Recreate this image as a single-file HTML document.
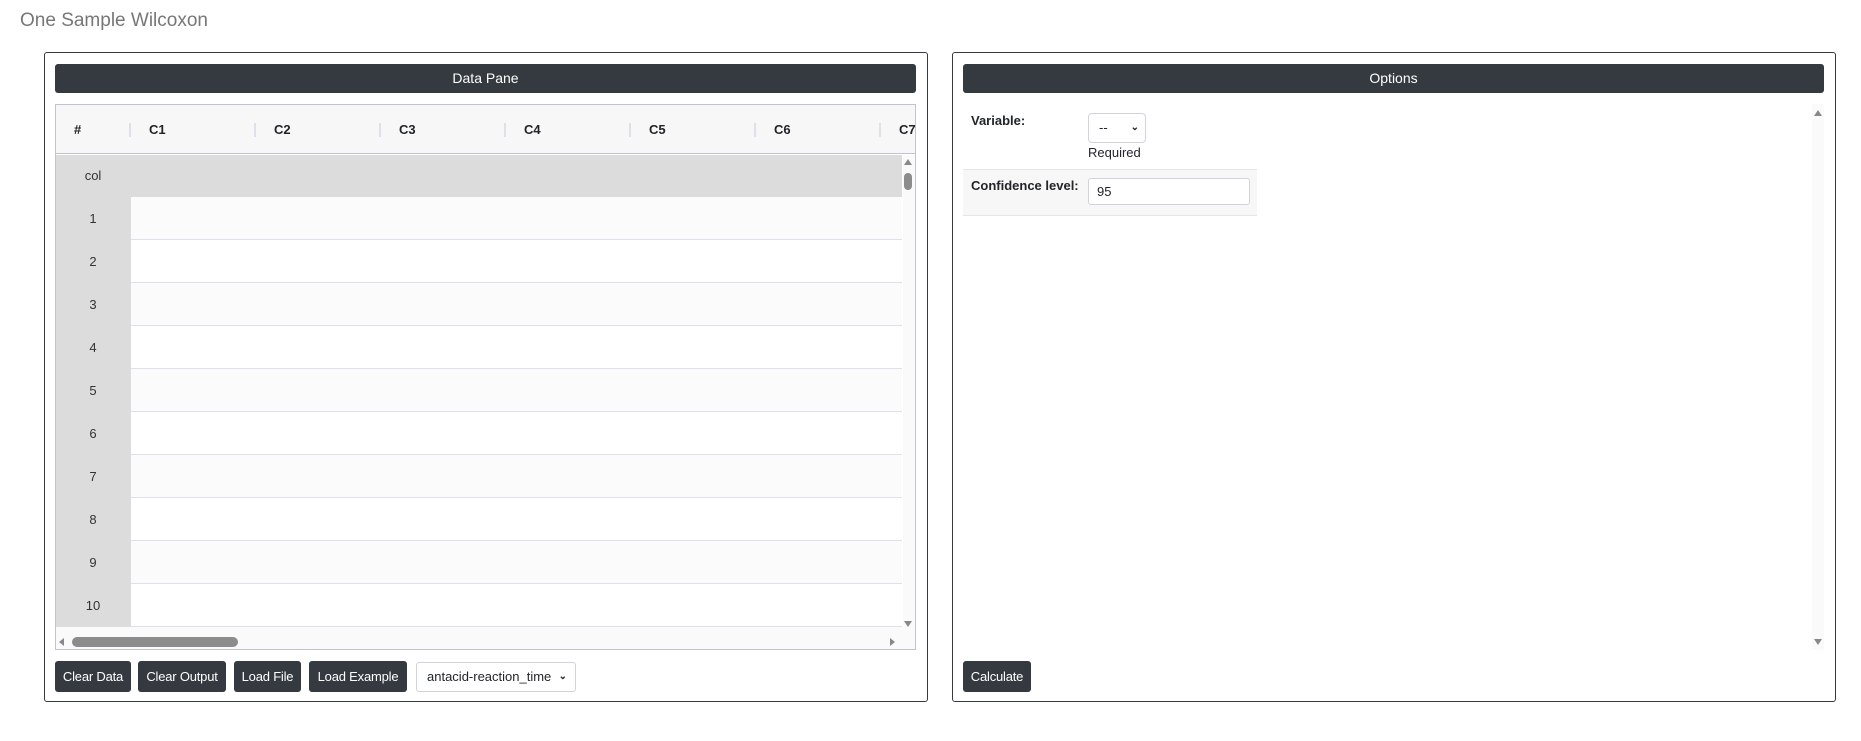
<!DOCTYPE html>
<html><head><meta charset="utf-8"><style>
*{box-sizing:border-box;margin:0;padding:0}
body{width:1861px;height:741px;background:#fff;font-family:"Liberation Sans",sans-serif;position:relative;overflow:hidden;color:#212529}
.abs{position:absolute}
.title{left:20px;top:10px;font-size:19px;color:#777;font-weight:300}
.panel{border:1px solid #343a40;border-radius:3px;top:52px;height:650px}
.bar{background:#343a40;color:#fff;font-size:14px;text-align:center;line-height:29px;height:29px;border-radius:3px}
.btn{background:#343a40;color:#fff;font-size:13px;line-height:31px;height:31px;text-align:center;border-radius:3px;top:661px;white-space:nowrap;letter-spacing:-0.2px}
.hdr{font-weight:bold;font-size:13px;top:105px;height:49px;line-height:49px}
.sep{width:2px;height:14px;background:#dde2ea;top:123px}
.rn{left:55px;width:76px;text-align:center;font-size:13px;color:#333}
</style></head><body>
<div class="abs title">One Sample Wilcoxon</div>
<div class="abs panel" style="left:44px;width:884px"></div>
<div class="abs bar" style="left:55px;width:861px;top:64px">Data Pane</div>
<div class="abs" style="left:55px;top:104px;width:861px;height:546px;border:1px solid #c0c4cc;background:#fff"></div>
<div class="abs" style="left:56px;top:105px;width:859px;height:49px;background:#f7f7f8;border-bottom:1px solid #c0c4cc"></div>
<div class="abs hdr" style="left:74px">#</div>
<div class="abs sep" style="left:129px"></div><div class="abs hdr" style="left:149px">C1</div>
<div class="abs sep" style="left:254px"></div><div class="abs hdr" style="left:274px">C2</div>
<div class="abs sep" style="left:379px"></div><div class="abs hdr" style="left:399px">C3</div>
<div class="abs sep" style="left:504px"></div><div class="abs hdr" style="left:524px">C4</div>
<div class="abs sep" style="left:629px"></div><div class="abs hdr" style="left:649px">C5</div>
<div class="abs sep" style="left:754px"></div><div class="abs hdr" style="left:774px">C6</div>
<div class="abs sep" style="left:879px"></div><div class="abs hdr" style="left:899px">C7</div>
<div class="abs" style="left:56px;top:155px;width:846px;height:42px;background:#dcdcdc"></div>
<div class="abs rn" style="top:155px;line-height:42px">col</div>
<div class="abs" style="left:56px;top:197px;width:75px;height:430px;background:#dcdcdc"></div>
<div class="abs" style="left:131px;top:197px;width:771px;height:43px;background:#fbfbfb;border-bottom:1px solid #dde2ea"></div>
<div class="abs" style="left:131px;top:240px;width:771px;height:43px;border-bottom:1px solid #dde2ea"></div>
<div class="abs" style="left:131px;top:283px;width:771px;height:43px;background:#fbfbfb;border-bottom:1px solid #dde2ea"></div>
<div class="abs" style="left:131px;top:326px;width:771px;height:43px;border-bottom:1px solid #dde2ea"></div>
<div class="abs" style="left:131px;top:369px;width:771px;height:43px;background:#fbfbfb;border-bottom:1px solid #dde2ea"></div>
<div class="abs" style="left:131px;top:412px;width:771px;height:43px;border-bottom:1px solid #dde2ea"></div>
<div class="abs" style="left:131px;top:455px;width:771px;height:43px;background:#fbfbfb;border-bottom:1px solid #dde2ea"></div>
<div class="abs" style="left:131px;top:498px;width:771px;height:43px;border-bottom:1px solid #dde2ea"></div>
<div class="abs" style="left:131px;top:541px;width:771px;height:43px;background:#fbfbfb;border-bottom:1px solid #dde2ea"></div>
<div class="abs" style="left:131px;top:584px;width:771px;height:43px;border-bottom:1px solid #dde2ea"></div>
<div class="abs rn" style="top:197px;line-height:43px">1</div>
<div class="abs rn" style="top:240px;line-height:43px">2</div>
<div class="abs rn" style="top:283px;line-height:43px">3</div>
<div class="abs rn" style="top:326px;line-height:43px">4</div>
<div class="abs rn" style="top:369px;line-height:43px">5</div>
<div class="abs rn" style="top:412px;line-height:43px">6</div>
<div class="abs rn" style="top:455px;line-height:43px">7</div>
<div class="abs rn" style="top:498px;line-height:43px">8</div>
<div class="abs rn" style="top:541px;line-height:43px">9</div>
<div class="abs rn" style="top:584px;line-height:43px">10</div>
<div class="abs" style="left:56px;top:627px;width:859px;height:22px;background:#fafafa"></div>
<div class="abs" style="left:72px;top:637px;width:166px;height:10px;border-radius:5px;background:#8c8c8c"></div>
<div class="abs" style="left:59px;top:638px;width:0;height:0;border-top:4px solid transparent;border-bottom:4px solid transparent;border-right:5px solid #888"></div>
<div class="abs" style="left:890px;top:638px;width:0;height:0;border-top:4px solid transparent;border-bottom:4px solid transparent;border-left:5px solid #888"></div>
<div class="abs" style="left:903px;top:155px;width:12px;height:472px;background:#fafafa"></div>
<div class="abs" style="left:904px;top:159px;border-left:4px solid transparent;border-right:4px solid transparent;border-bottom:6px solid #888"></div>
<div class="abs" style="left:904px;top:173px;width:8px;height:17px;border-radius:4px;background:#8c8c8c"></div>
<div class="abs" style="left:904px;top:621px;border-left:4px solid transparent;border-right:4px solid transparent;border-top:6px solid #888"></div>
<div class="abs btn" style="left:55px;width:76px">Clear Data</div>
<div class="abs btn" style="left:138px;width:88px">Clear Output</div>
<div class="abs btn" style="left:234px;width:67px">Load File</div>
<div class="abs btn" style="left:309px;width:98px">Load Example</div>
<div class="abs" style="left:416px;top:662px;width:160px;height:30px;border:1px solid #ced4da;border-radius:3px;font-size:13px;line-height:28px;padding-left:10px">antacid-reaction_time<span style="position:absolute;right:8px;font-size:10px;font-weight:bold">&#8964;</span></div>

<div class="abs panel" style="left:952px;width:884px"></div>
<div class="abs bar" style="left:963px;width:861px;top:64px">Options</div>
<div class="abs" style="left:971px;top:113px;font-size:13px;font-weight:bold">Variable:</div>
<div class="abs" style="left:1088px;top:113px;width:58px;height:30px;border:1px solid #ced4da;border-radius:4px;font-size:13px;line-height:28px;padding-left:10px">--<span style="position:absolute;right:6px;font-size:10px;font-weight:bold">&#8964;</span></div>
<div class="abs" style="left:1088px;top:145px;font-size:13px">Required</div>
<div class="abs" style="left:963px;top:169px;width:294px;height:47px;background:#f7f7f7;border-top:1px solid #e5e5e5;border-bottom:1px solid #e5e5e5"></div>
<div class="abs" style="left:971px;top:178px;font-size:13px;font-weight:bold">Confidence level:</div>
<div class="abs" style="left:1088px;top:178px;width:162px;height:27px;border:1px solid #ced4da;border-radius:3px;background:#fff;font-size:13px;line-height:25px;padding-left:8px">95</div>
<div class="abs" style="left:1812px;top:104px;width:12px;height:546px;background:#fafafa"></div>
<div class="abs" style="left:1814px;top:110px;border-left:4px solid transparent;border-right:4px solid transparent;border-bottom:6px solid #888"></div>
<div class="abs" style="left:1814px;top:639px;border-left:4px solid transparent;border-right:4px solid transparent;border-top:6px solid #888"></div>
<div class="abs btn" style="left:963px;width:68px">Calculate</div>
</body></html>
